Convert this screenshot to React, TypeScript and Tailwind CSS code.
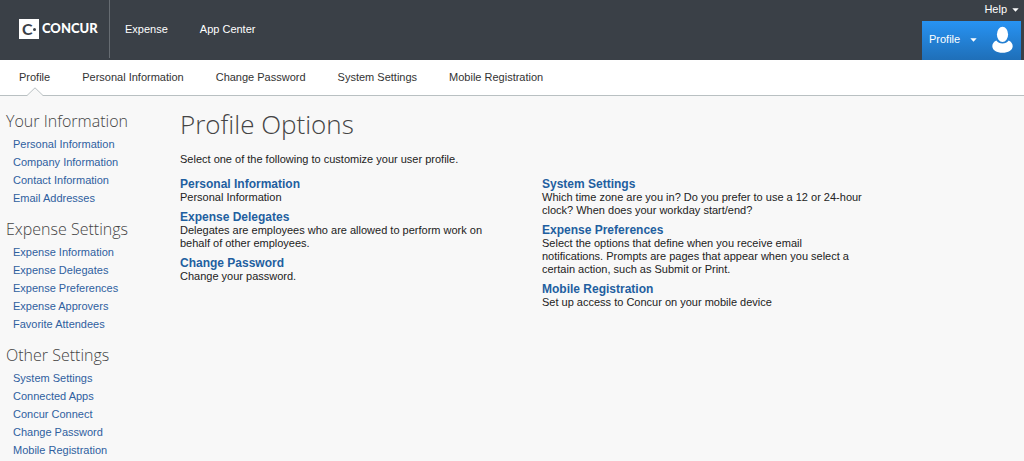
type Option = { title: string; text: string };

const tabs = ["Profile", "Personal Information", "Change Password", "System Settings", "Mobile Registration"];

const menu = [
  {
    title: "Your Information",
    links: ["Personal Information", "Company Information", "Contact Information", "Email Addresses"],
  },
  {
    title: "Expense Settings",
    links: ["Expense Information", "Expense Delegates", "Expense Preferences", "Expense Approvers", "Favorite Attendees"],
  },
  {
    title: "Other Settings",
    links: ["System Settings", "Connected Apps", "Concur Connect", "Change Password", "Mobile Registration"],
  },
];

const leftOptions: Option[] = [
  { title: "Personal Information", text: "Personal Information" },
  {
    title: "Expense Delegates",
    text: "Delegates are employees who are allowed to perform work on behalf of other employees.",
  },
  { title: "Change Password", text: "Change your password." },
];

const rightOptions: Option[] = [
  {
    title: "System Settings",
    text: "Which time zone are you in? Do you prefer to use a 12 or 24-hour clock? When does your workday start/end?",
  },
  {
    title: "Expense Preferences",
    text: "Select the options that define when you receive email notifications. Prompts are pages that appear when you select a certain action, such as Submit or Print.",
  },
  { title: "Mobile Registration", text: "Set up access to Concur on your mobile device" },
];

function Caret() {
  return (
    <svg width="7" height="4" viewBox="0 0 7 4" fill="white" aria-hidden="true">
      <path d="M.3.3h6.400L3.500 3.700z" />
    </svg>
  );
}

function Logo() {
  return (
    <a href="#" className="flex items-center gap-[3px] font-['Lato',sans-serif] text-white">
      <span className="relative flex size-5 items-center bg-white pl-[3px] text-base leading-5 font-bold text-[#3a4047]">
        C
        <span className="absolute right-[3px] bottom-2 size-[3px] rounded-full bg-[#3a4047]" />
      </span>
      <span className="text-[13px] font-black">CONCUR</span>
    </a>
  );
}

function Header() {
  return (
    <header className="flex h-15 justify-between bg-[#3a4047] text-[11px] text-white">
      <div className="flex pb-0.5">
        <div className="flex w-[110px] items-center border-r border-[#666c72] pl-[19px]">
          <Logo />
        </div>
        <nav className="flex items-center gap-8 pl-[15px]">
          <a href="#">Expense</a>
          <a href="#">App Center</a>
        </nav>
      </div>
      <div className="flex flex-col items-end pr-[3px]">
        <button className="flex h-[21px] items-center gap-[5px] pr-[2px] pb-0.5">
          Help
          <Caret />
        </button>
        <button className="flex h-[39px] w-[99px] items-center bg-linear-to-b from-[#2793f3] to-[#1f6fb8] pr-[8px] pb-0.5 pl-[7px]">
          Profile
          <span className="ml-[10px]">
            <Caret />
          </span>
          <svg className="ml-auto" width="21" height="27" viewBox="0 0 21 27" fill="white" aria-hidden="true">
            <ellipse cx="10.5" cy="8.4" rx="5.6" ry="7.6" />
            <path d="M4.300 14.600C1.700 15.800.3 17.900.3 20.200c0 3.800 4.500 6.600 10.200 6.600s10.200-2.800 10.200-6.600c0-2.300-1.400-4.400-4-5.600-1.400 1.900-3.600 3-6.200 3s-4.800-1.100-6.200-3z" />
          </svg>
        </button>
      </div>
    </header>
  );
}

function Tabs() {
  return (
    <nav className="flex h-9 gap-8 border-b border-[#b9c0c2] bg-white pl-[19px] text-[11px] text-[#333]">
      {tabs.map((tab, i) => (
        <a key={tab} href="#" className="relative flex items-center">
          {tab}
          {i === 0 && (
            <svg className="absolute -bottom-px left-1/2 -translate-x-1/2" width="18" height="9" viewBox="0 0 18 9" aria-hidden="true">
              <path d="M0 9v-.5h1L9 .8l8 7.700h1V9z" fill="#f8f8f8" />
              <path d="M0 8.500h1L9 .8l8 7.700h1" fill="none" stroke="#b9c0c2" />
            </svg>
          )}
        </a>
      ))}
    </nav>
  );
}

function Sidebar() {
  return (
    <aside className="flex w-[180px] shrink-0 flex-col gap-[10px] pt-[13px] pl-[6px]">
      {menu.map((group) => (
        <section key={group.title}>
          <h2 className="font-['Open_Sans',sans-serif] text-base leading-6 font-light text-[#444]">{group.title}</h2>
          <ul className="mt-[2px] pl-[7px] text-[11px] leading-[18px] text-[#2f609f]">
            {group.links.map((link) => (
              <li key={link}>
                <a href="#">{link}</a>
              </li>
            ))}
          </ul>
        </section>
      ))}
    </aside>
  );
}

function OptionList({ options }: { options: Option[] }) {
  return (
    <div className="flex flex-1 flex-col gap-[6px]">
      {options.map((option) => (
        <section key={option.title} className="max-w-[322px]">
          <h3 className="text-xs leading-[14px] font-bold text-[#1f5fa0]">
            <a href="#">{option.title}</a>
          </h3>
          <p className="leading-[13px]">{option.text}</p>
        </section>
      ))}
    </div>
  );
}

export default function App() {
  return (
    <div className="min-h-screen bg-[#f8f8f8] font-['Liberation_Sans',Arial,sans-serif] text-[#222]">
      <Header />
      <Tabs />
      <div className="flex">
        <Sidebar />
        <main className="flex-1 pt-[10px] pr-[120px] text-[11px]">
          <h1 className="font-['Open_Sans',sans-serif] text-[26px] leading-9 font-light text-[#444]">Profile Options</h1>
          <p className="mt-[9px] leading-4">Select one of the following to customize your user profile.</p>
          <div className="mt-[10px] flex">
            <OptionList options={leftOptions} />
            <OptionList options={rightOptions} />
          </div>
        </main>
      </div>
    </div>
  );
}
